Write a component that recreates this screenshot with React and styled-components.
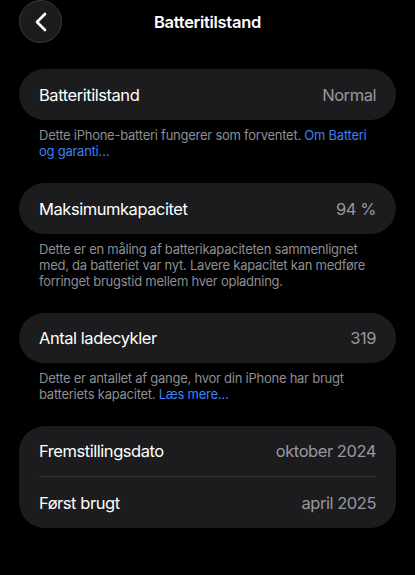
import React from "react";
import styled, { createGlobalStyle } from "styled-components";

const Global = createGlobalStyle`
  html, body { margin: 0; padding: 0; background: #000; }
  body { font-family: Inter, "Noto Sans", sans-serif; -webkit-font-smoothing: antialiased; }
`;

const Page = styled.div`
  width: 415px;
  min-height: 575px;
  background: #000;
  color: #fff;
  box-sizing: border-box;
  padding: 0 19px;
`;

const Header = styled.header`
  display: grid;
  grid-template-columns: 43px 1fr 43px;
  align-items: center;
  height: 43px;
  margin-bottom: 26px;
`;

const BackButton = styled.button`
  width: 43px;
  height: 43px;
  border-radius: 50%;
  background: #1c1c1e;
  border: 1px solid #3a3a3c;
  display: flex;
  align-items: center;
  justify-content: center;
  padding: 0;
  box-sizing: border-box;
`;

const Title = styled.h1`
  margin: 0;
  text-align: center;
  font-size: 16.5px;
  font-weight: 600;
  letter-spacing: -0.3px;
`;

const Card = styled.div`
  background: #1c1c1e;
  border-radius: 26px;
  padding: 0 20px;
`;

const Row = styled.div`
  display: flex;
  align-items: center;
  justify-content: space-between;
  height: ${(p) => p.$h || 51}px;
  font-size: 16.5px;
  letter-spacing: -0.45px;
  & + & {
    border-top: 1px solid #38383a;
  }
`;

const Label = styled.span`
  color: #fff;
`;

const Value = styled.span`
  color: #98989e;
`;

const Footnote = styled.p`
  margin: 0;
  padding: 7px 20px 24px;
  font-size: 13px;
  line-height: 16px;
  color: #8e8e93;
  letter-spacing: -0.25px;
`;

const Link = styled.a`
  color: #3b82f6;
  text-decoration: none;
`;

const Chevron = () => (
  <svg width="12" height="20" viewBox="0 0 12 20" fill="none">
    <path d="M10 2 L2 10 L10 18" stroke="#fff" strokeWidth="2.6" strokeLinecap="round" strokeLinejoin="round" />
  </svg>
);

export default function App() {
  return (
    <>
      <Global />
      <Page>
        <Header>
          <BackButton aria-label="Tilbage">
            <Chevron />
          </BackButton>
          <Title>Batteritilstand</Title>
          <span />
        </Header>

        <Card>
          <Row>
            <Label>Batteritilstand</Label>
            <Value>Normal</Value>
          </Row>
        </Card>
        <Footnote>
          Dette iPhone-batteri fungerer som forventet. <Link>Om Batteri og garanti…</Link>
        </Footnote>

        <Card>
          <Row>
            <Label>Maksimumkapacitet</Label>
            <Value>94 %</Value>
          </Row>
        </Card>
        <Footnote>
          Dette er en måling af batterikapaciteten sammenlignet med, da batteriet var nyt. Lavere kapacitet kan medføre forringet brugstid mellem hver opladning.
        </Footnote>

        <Card>
          <Row $h={50}>
            <Label>Antal ladecykler</Label>
            <Value>319</Value>
          </Row>
        </Card>
        <Footnote>
          Dette er antallet af gange, hvor din iPhone har brugt batteriets kapacitet. <Link>Læs mere…</Link>
        </Footnote>

        <Card>
          <Row $h={50}>
            <Label>Fremstillingsdato</Label>
            <Value>oktober 2024</Value>
          </Row>
          <Row $h={51}>
            <Label>Først brugt</Label>
            <Value>april 2025</Value>
          </Row>
        </Card>
      </Page>
    </>
  );
}
